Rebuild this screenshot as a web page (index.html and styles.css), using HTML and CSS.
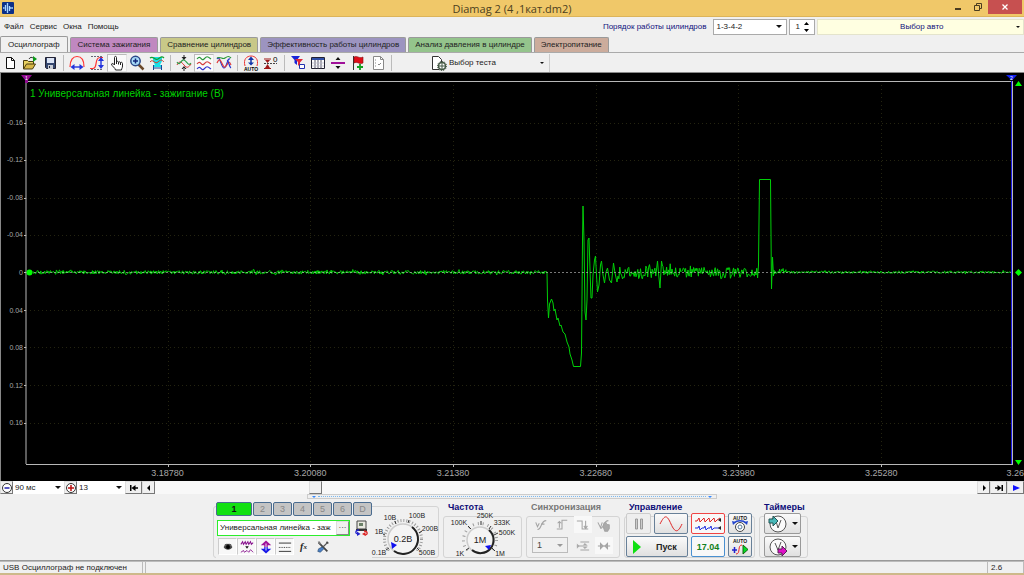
FILE: index.html
```html
<!DOCTYPE html>
<html lang="ru">
<head>
<meta charset="utf-8">
<title>Diamag 2 (4 ,1кат.dm2)</title>
<link rel="stylesheet" href="styles.css">
<script src="trace.js" defer></script>
</head>
<body>
<div class="app">
<header class="titlebar">
  <svg class="app-icon" viewBox="0 0 12 12"><rect width="12" height="12" rx="1" fill="#0c3088"/><path d="M1 6h1.500M3.500 3v6M5.500 1v10M7.500 4v5M9 5v2M10 6h1" fill="none" stroke="#a8d4ff" stroke-width="1.300"/></svg>
  <h1>Diamag 2 (4 ,1кат.dm2)</h1>
  <div class="window-buttons">
    <button aria-label="Свернуть"><svg width="8" height="8"><path d="M1 6h6" stroke="#4a3c20" stroke-width="2"/></svg></button>
    <button aria-label="Восстановить"><svg width="8" height="8"><path d="M2.500 2V.500h5v5H6M.500 2.500h5v5h-5z" fill="none" stroke="#4a3c20"/></svg></button>
    <button class="close" aria-label="Закрыть"><svg width="6" height="6"><path d="M.5.500l5 5m0-5l-5 5" stroke="#fff" stroke-width="1.300"/></svg></button>
  </div>
</header>

<div class="menubar">
  <nav class="menu"><a href="#">Файл</a><a href="#">Сервис</a><a href="#">Окна</a><a href="#">Помощь</a></nav>
  <div class="engine">
    <label for="order">Порядок работы цилиндров</label>
    <div class="pick order"><select id="order"><option>1-3-4-2</option></select><span class="arrow"></span></div>
    <div class="pick count"><input id="count" type="text" value="1" aria-label="Цилиндр"><svg width="7" height="12"><path d="M1 4L3.500 1 6 4zM1 8L3.500 11 6 8z"/></svg></div>
    <div class="pick auto"><select aria-label="Авто"><option>Выбор авто</option></select><span class="arrow"></span></div>
  </div>
</div>

<nav class="tabs">
  <button class="tab t1">Осциллограф</button>
  <button class="tab t2">Система зажигания</button>
  <button class="tab t3">Сравнение цилиндров</button>
  <button class="tab t4">Эффективность работы цилиндров</button>
  <button class="tab t5">Анализ давления в цилиндре</button>
  <button class="tab t6">Электропитание</button>
</nav>

<div class="toolbar">
  <button aria-label="Новый"><svg viewBox="0 0 16 16"><path d="M4.500 2.500h5l3 3v8h-8z" fill="#fff" stroke="#111"/><path d="M9.500 2.500v3h3" fill="none" stroke="#111"/></svg></button>
  <button aria-label="Открыть"><svg viewBox="0 0 16 16"><path d="M1.500 14V5.500h4l1 1h5V9" fill="#e8d060" stroke="#4a3c10"/><path d="M1.500 14l3-5h9l-3 5z" fill="#d8b848" stroke="#4a3c10"/><path d="M7 4c1-2 3-2 4-1" fill="none" stroke="#333"/><path d="M11 1l4 3-4 3z" fill="#0a9a18"/></svg></button>
  <button aria-label="Сохранить"><svg viewBox="0 0 16 16"><path d="M3.500 2.500h10v11h-9l-1-1z" fill="#34466e" stroke="#223"/><path d="M5 3h7v5H5z" fill="#dce4f4"/><path d="M6 10h5v4H6z" fill="#c8ccd4"/><path d="M7 11h1v2H7z" fill="#223"/></svg></button>
  <i class="sep"></i>
  <button aria-label="Размах по горизонтали"><svg viewBox="0 0 16 16"><path d="M1 12C1 5 4 1.500 8 1.500S15 5 15 12" fill="none" stroke="#f33" stroke-width="1.200"/><path d="M3 12h10" stroke="#23d" stroke-width="1.400"/><path d="M1.500 12l4-3v6zM14.500 12l-4-3v6z" fill="#23d"/></svg></button>
  <button aria-label="Размах по вертикали"><svg viewBox="0 0 16 16"><path d="M1 13.500h3C9 13.500 5 2.500 11 2.500h3" fill="none" stroke="#f33" stroke-width="1.200"/><path d="M2 1.500h12M2 14.500h12" stroke="#667" stroke-dasharray="2 1"/><path d="M12 4v8" stroke="#23d" stroke-width="1.400"/><path d="M12 2l-3 4h6zM12 14l-3-4h6z" fill="#23d"/></svg></button>
  <button class="on" aria-label="Рука"><svg viewBox="0 0 16 16"><path d="M5.500 10V2.500c0-1.500 2-1.500 2 0V7c0-1 2-1 2 .5 0-1 2-1 2 .5 0-1 2-1 2 .5V11c0 2-1 2.500-1 4h-6c0-2-4-4-4-6 .5-1 2-.5 3 1z" fill="#fff" stroke="#222"/><path d="M7.500 7v2M9.500 7.500v2M11.500 8v2" stroke="#222"/></svg></button>
  <button aria-label="Масштаб"><svg viewBox="0 0 16 16"><path d="M9.500 9.500l5 5" stroke="#6b4a2c" stroke-width="2.500"/><circle cx="6.500" cy="6" r="4.700" fill="#a8dcf8" stroke="#2a4888" stroke-width="1.500"/><path d="M4 6h5M6.500 3.500v5" stroke="#11257a" stroke-width="1.500"/></svg></button>
  <button aria-label="Линейки"><svg viewBox="0 0 16 16"><path d="M4 2h9v4l-2 4h2v2H4v-2h2L4 6z" fill="#18e0e8"/><path d="M1 3c3-3 5 3 8 1s4-3 6-1" fill="none" stroke="#16a030" stroke-width="1.200"/><path d="M1 7c3-4 5 3 8 0s4-2 6 0" fill="none" stroke="#d04030"/><path d="M4.500 10v5M12.500 10v5M5 13h7" stroke="#124a98"/></svg></button>
  <i class="sep"></i>
  <button aria-label="Сжать"><svg viewBox="0 0 16 16"><path d="M1 10c2-4 4-4 7 0s5 2 7-1" fill="none" stroke="#d33"/><path d="M1 7c3 5 4-3 7-2s4 7 7 3" fill="none" stroke="#28a048" stroke-width="1.200"/><path d="M8 5L5.500 2h5zM8 11l-2.500 3h5zM7.500 0h1v3h-1zM7.500 13h1v3h-1z" fill="#222"/></svg></button>
  <button class="on" aria-label="Разделить"><svg viewBox="0 0 16 16" fill="none" stroke-width="1.200"><path d="M1 4c4-5 4 3 7 0s3-3 7 0" stroke="#289838"/><path d="M1 9c4-5 4 3 7 0s3-3 7 0" stroke="#d43c3c"/><path d="M1 14c4-5 4 3 7 0s3-3 7 0" stroke="#33c"/></svg></button>
  <button aria-label="Совместить"><svg viewBox="0 0 16 16" fill="none" stroke-width="1.200"><path d="M1 4c3-5 4 9 7 9s3-10 6-9" stroke="#2233d0"/><path d="M1 8c4-9 5 5 8 4s3-9 6-2" stroke="#e03c3c"/><path d="M1 3c4-2 5 2 8 0s4-2 6 0" stroke="#289838"/><path d="M11 5c2 1 2 7 4 8" stroke="#2233d0"/></svg></button>
  <i class="sep"></i>
  <button aria-label="Автомасштаб"><svg viewBox="0 0 16 16"><path d="M2 11C0 4 4 1 8 1s8 3 6 10" fill="none" stroke="#e33"/><path d="M8 3v6" stroke="#13a" stroke-width="1.500"/><path d="M8 1.500L5 5h6zM8 10.500L5 7.500h6z" fill="#13a"/><text x="8" y="15.500" font-size="5" font-weight="700" text-anchor="middle">AUTO</text></svg></button>
  <button aria-label="Ноль"><svg viewBox="0 0 16 16"><path d="M1 8.500h13" stroke="#444" stroke-dasharray="2 1"/><path d="M4.500 8L2 5h5zM4.500 9L2 13h5z" fill="#a01818"/><path d="M1 3.500h7v1H1zM1 13h7v1H1z" fill="#a01818"/><text x="10" y="7" font-size="8">0</text></svg></button>
  <i class="sep"></i>
  <button aria-label="Фильтр"><svg viewBox="0 0 16 16"><path d="M1 1h9L7 5v5L4.500 8V5z" fill="#1824d8"/><path d="M5 4h8l-3 3.500V12L8 10V7z" fill="#e02838"/><path d="M9.500 9.500h5v4h-5z" fill="#fff" stroke="#2030b0"/></svg></button>
  <button aria-label="Таблица"><svg viewBox="0 0 16 16"><path d="M1.500 2.500h13v11h-13z" fill="#fff" stroke="#223"/><path d="M2 3h12v2H2z" fill="#3050a8"/><path d="M5 5v8.500M8 5v8.500M11 5v8.500" stroke="#556"/><path d="M2 8h12M2 11h12" stroke="#bbc" stroke-width=".8"/></svg></button>
  <button aria-label="Разделитель"><svg viewBox="0 0 16 16"><path d="M1 8h14" stroke="#a0109a" stroke-width="2"/><path d="M8 2L5.500 5h5zM8 14l-2.500-3h5z" fill="#111"/></svg></button>
  <button aria-label="Флаг"><svg viewBox="0 0 16 16"><path d="M3.500 1v14" stroke="#333"/><path d="M4 2c3-2 5 2 9 0v6c-4 2-5-2-9 0z" fill="#e00c18" stroke="#801010" stroke-width=".6"/><path d="M7 12h6M10 9v6" stroke="#10a020" stroke-width="1.800"/></svg></button>
  <button aria-label="Отчёт"><svg viewBox="0 0 16 16"><path d="M3.500 1.500h7l3 3v10h-10z" fill="#fff" stroke="#888"/><path d="M10.500 1.500v3h3M5 5h1M5 8h1M5 11h1M8 9l1 1 2-2" fill="none" stroke="#888"/></svg></button>
  <i class="sep"></i>
  <button class="test"><svg viewBox="0 0 16 16"><path d="M8 14.500H1.500v-13h6l3 3V7" fill="#fff" stroke="#333"/><circle cx="11" cy="11" r="3.500" fill="#fff" stroke="#455a45" stroke-width="1.500"/><circle cx="11" cy="11" r="4.500" fill="none" stroke="#344834" stroke-dasharray="1.200 1.100"/><path d="M8 11h6M11 8v6" stroke="#455a45"/></svg><span>Выбор теста</span><b class="arrow"></b></button>
</div>

<main class="chart">
  <svg class="plot" viewBox="26 81 987 383" preserveAspectRatio="none">
    <g class="grid">
      <path d="M26 123.500H1013M26 160.500H1013M26 198.500H1013M26 235.500H1013M26 310.500H1013M26 347.500H1013M26 385.500H1013M26 423.500H1013"/>
      <path d="M168.500 81V464M310.500 81V464M453.500 81V464M596.500 81V464M738.500 81V464M881.500 81V464"/>
    </g>
    <path id="trace" class="trace"/>
    <path class="zero" d="M26 272.500H1013"/>
    <path class="ticks" d="M168.500 464v3M310.500 464v3M453.500 464v3M596.500 464v3M738.500 464v3M881.500 464v3M24 123.500h2M24 160.500h2M24 198.500h2M24 235.500h2M24 272.500h2M24 310.500h2M24 347.500h2M24 385.500h2M24 423.500h2"/>
    <path class="frame" d="M26 81.500H1013M26 464.500H1013M26 81V464M1012.500 81V464"/>
    <path d="M1011.500 81V464" stroke="#1818e0"/>
    <circle cx="29.500" cy="272.500" r="3" fill="#0f0"/>
    <path d="M21 75h11l-4 5v3h-3v-3z" fill="#900a90"/><path d="M1006 75h11l-5 5.500z" fill="#1020f0"/>
    <path d="M1018.500 81l3.500 5h-7zM1018.500 465l3.500-5h-7zM1018.500 269l3.500 3.500-3.500 3.500-3.500-3.500z" fill="#0f0"/>
    <text x="25" y="80" fill="#fff" font-size="5">1</text><text x="1010" y="80" fill="#fff" font-size="5">2</text>
  </svg>
  <div class="channel-title">1 Универсальная линейка - зажигание (В)</div>
  <div class="y-axis"><span>-0.16</span><span>-0.12</span><span>-0.08</span><span>-0.04</span><span>0</span><span>0.04</span><span>0.08</span><span>0.12</span><span>0.16</span></div>
  <div class="x-axis"><span>3.18780</span><span>3.20080</span><span>3.21380</span><span>3.22680</span><span>3.23980</span><span>3.25280</span><span>3.26</span></div>
</main>

<div class="scrollrow">
  <button aria-label="Уменьшить"><svg viewBox="0 0 12 12"><circle cx="6" cy="6" r="4.500" fill="#fff" stroke="#333"/><path d="M3.500 6h5" stroke="#22a" stroke-width="1.500"/></svg></button>
  <div class="pick"><select class="time" aria-label="Время"><option>90 мс</option></select><span class="arrow"></span></div>
  <button aria-label="Увеличить"><svg viewBox="0 0 12 12"><circle cx="6" cy="6" r="4.500" fill="#fff" stroke="#333"/><path d="M3 6h6M6 3v6" stroke="#b11" stroke-width="1.500"/></svg></button>
  <div class="pick"><select class="zoom" aria-label="Масштаб"><option>13</option></select><span class="arrow"></span></div>
  <button class="wide" aria-label="В начало"><svg viewBox="0 0 12 12"><path d="M2 3h1.500v6H2zM3.500 6l4-3v2.200H10v1.600H7.500V9z"/></svg></button>
  <button aria-label="Назад"><svg viewBox="0 0 12 12"><path d="M4 6l3-3v6z"/></svg></button>
  <div class="track"><i class="thumb"></i></div>
  <button aria-label="Вперёд"><svg viewBox="0 0 12 12"><path d="M8 6L5 3v6z"/></svg></button>
  <button class="wide" aria-label="В конец"><svg viewBox="0 0 12 12"><path d="M10 3H8.500v6H10zM8.500 6l-4-3v2.200H2v1.600h2.500V9z"/></svg></button>
  <button class="wide" aria-label="Воспроизвести"><svg viewBox="0 0 12 12"><path d="M10 6L3 3v6z" fill="#11f"/></svg></button>
</div>

<section class="panel">
  <div class="splitter"><i></i><b></b><i></i></div>
  <div class="groups">
    <fieldset class="group g-channel">
      <div class="channel">
        <div class="channel-buttons"><button class="active">1</button><button>2</button><button>3</button><button>4</button><button>5</button><button>6</button><button>D</button></div>
        <div class="probe">
          <div class="probe-box"><input type="text" value="Универсальная линейка - заж" aria-label="Датчик"><button>···</button></div>
          <svg width="14" height="16" viewBox="0 0 14 16"><path d="M3 1h9v8H3z" fill="#e8e8e0" stroke="#444"/><path d="M2 10h11" stroke="#333" stroke-width="2"/><path d="M5 3h4v3H5z" fill="#6a8068"/><path d="M5 10c-4 0-4 4-1 4" fill="none" stroke="#22c" stroke-width="1.300"/><path d="M3 11.500L6.500 14 3 16z" fill="#22c"/><path d="M10 11c4 0 4 4 1 4" fill="none" stroke="#d22" stroke-width="1.300"/><path d="M11.500 12L8 14l3.500 2z" fill="#d22"/></svg>
        </div>
        <div class="channel-tools">
          <button class="on" aria-label="Видимость"><svg viewBox="0 0 16 16"><path d="M3 8c2-4 8-4 10 0-2 4-8 4-10 0z" fill="#444"/><circle cx="8" cy="8" r="2.200"/><path d="M4 6l2-1 4 0 2 1" stroke="#111" fill="none"/></svg></button>
          <button class="on" aria-label="Фильтр"><svg viewBox="0 0 16 16" fill="none" stroke="#8a1490"><path d="M1 5l2-3 1 3 2-3 1 3 2-3 1 3 2-3 1 3 2-2" stroke-width="1.200"/><path d="M1 14l3-2 1 2 3-2 2 2 2-3 3 3"/><path d="M6 7h4L8 10z" fill="#111" stroke="none"/></svg></button>
          <button class="on" aria-label="Инверсия"><svg viewBox="0 0 16 16"><path d="M6 8V6H2l6-5.500L14 6h-4v2z" fill="#a0109a"/><path d="M6 8v2H2l6 5.500L14 10h-4V8z" fill="#1818e8"/><path d="M7.500 4h1v8h-1z" fill="#fff"/></svg></button>
          <button class="on" aria-label="Линии"><svg viewBox="0 0 16 16"><path d="M1 3.500h14M1 13h14" stroke="#222"/><path d="M1 8.500h14" stroke="#222" stroke-dasharray="1 1"/></svg></button>
          <button class="fx">f<small>x</small></button>
          <button aria-label="Настройки"><svg viewBox="0 0 16 16"><path d="M3 3l10 10M12 2l2 2" stroke="#444" stroke-width="2"/><path d="M13 3l-7 7" stroke="#555" stroke-width="1.500"/><path d="M7 8l2 2-4 4-3-1 1-3z" fill="#4a80c8" stroke="#246" stroke-width=".7"/><path d="M2 2l2-.5 2 3-2 1z" fill="#777"/></svg></button>
        </div>
      </div>
      <svg class="knob" width="66" height="50" viewBox="372 508 66 50">
        <circle cx="403" cy="540" r="18.500" fill="none" stroke="#999" stroke-width="3" stroke-dasharray="1 2" class="arc"/>
        <circle cx="403" cy="540" r="15" fill="#f4f4f4" stroke="#ccc" stroke-width="1.500"/><path d="M412 528a15 15 0 0 1-18 24" fill="none" stroke="#222" stroke-width="2"/>
        <path d="M389 549l-3 2M385 536l-2-1M396 525l-1-3M408 524l1-3M419 534l3-2M417 549l2 2" stroke="#333"/>
        <path d="M391 543l6 3-5 4z" fill="#11e"/>
        <text x="403" y="543" class="value">0.2В</text><text x="390" y="521">10В</text><text x="417" y="519">100В</text><text x="379" y="535">1В</text><text x="430" y="532">200В</text><text x="379" y="556">0.1В</text><text x="427" y="556">500В</text>
      </svg>
    </fieldset>

    <fieldset class="group g-rate"><legend>Частота</legend>
      <svg class="knob" width="75" height="46" viewBox="446 512 75 46">
        <circle cx="481" cy="540" r="16.500" fill="none" stroke="#999" stroke-width="3" stroke-dasharray="1 4" class="arc"/>
        <circle cx="481" cy="540" r="13" fill="#f4f4f4" stroke="#ccc" stroke-width="1.500"/><path d="M490 530a13 13 0 0 1-17 20" fill="none" stroke="#222" stroke-width="2"/>
        <path d="M470 548l-3 2M472 529l-3-3M482 525v-4M490 529l2-3M495 535l4-2M493 548l3 3" stroke="#333"/>
        <path d="M492 545l-6 1 4 4z" fill="#11e"/>
        <text x="481" y="543" class="value">1M</text><text x="486" y="518">250K</text><text x="460" y="525">100K</text><text x="503" y="525">333K</text><text x="508" y="535">500K</text><text x="461" y="556">1K</text><text x="501" y="556">1M</text>
      </svg>
    </fieldset>

    <fieldset class="group g-sync"><legend class="muted">Синхронизация</legend>
      <div class="sync">
        <button aria-label="Синхронизация"><svg viewBox="0 0 16 16"><path d="M2 5l2 5 2-4M4 13c5 1 3-10 10-10M8 7h4" /></svg></button>
        <button aria-label="Фронт"><svg viewBox="0 0 16 16"><path d="M2 12.500h6v-10h6M5 11V4M3 6l2-2 2 2"/></svg></button>
        <button class="lit" aria-label="Спад"><svg viewBox="0 0 16 16"><path d="M1 3.500h6v9h7M11 3v8M9 9l2 3 2-3"/></svg></button>
        <button aria-label="Вручную"><svg viewBox="0 0 16 16"><path d="M1 5l3 6 2-6M4 12c4 0 3-9 9-9"/><path d="M8 6l2-1 1 2 3 1v4l-2 3H9L7 10z" fill="#aaa"/></svg></button>
        <div class="pick level"><select aria-label="Канал" disabled><option>1</option></select><span class="arrow"></span></div>
        <button aria-label="Уровень"><svg viewBox="0 0 16 16"><path d="M5 3.500h10M5 12.500h10M1 8h12"/><path d="M10 4.500l3 2.500h-5zM10 11.500l3-2.500h-5zM1 5l3 3-3 3z" fill="#aaa" stroke="none"/></svg></button>
        <button class="lit" aria-label="Центр"><svg viewBox="0 0 16 16"><path d="M1 8h14"/><path d="M4 5l3 3-3 3zM12 5L9 8l3 3z" fill="#aaa"/></svg></button>
      </div>
    </fieldset>

    <fieldset class="group g-control"><legend>Управление</legend>
      <div class="controls">
        <button class="pause" aria-label="Пауза"><svg viewBox="0 0 12 14"><path d="M2.500 2h2v10h-2zM7.500 2h2v10h-2z" fill="#ccc" stroke="#999"/></svg></button>
        <button aria-label="Синус"><svg width="24" height="16" viewBox="0 0 24 16"><path d="M1 8C6-2 8-1 12 8s7 9 11 0" fill="none" stroke="#e02828"/></svg></button>
        <button class="red" aria-label="Каналы"><svg width="28" height="16" viewBox="0 0 28 16" fill="none"><path d="M1 5h2l2-3 1 4 2-2 2-2 1 4 2-2 2-2 1 4 2-2 2-2 1 4 2-2 3-2" stroke="#e02020"/><path d="M1 12h3l1-2 1 4 2-2h2l1-2 1 4 2-2h2l1-2 1 4 2-2h5" stroke="#2030e0"/><path d="M27 2v4l-3-2zM27 10v4l-3-2z" fill="#222"/></svg></button>
        <button aria-label="Авто"><svg width="20" height="18" viewBox="0 0 20 18"><text x="10" y="5" class="auto-text">AUTO</text><circle cx="10" cy="12" r="4.500" fill="#fff" stroke="#444"/><path d="M4 8c3-3 9-3 12 0" fill="none" stroke="#24c" stroke-width="1.500"/><path d="M2 6l4 1-3 3zM18 6l-4 1 3 3z" fill="#24c"/><circle cx="10" cy="12" r="2" fill="none" stroke="#579"/></svg></button>
        <button class="start"><svg width="8" height="14" viewBox="0 0 8 14"><path d="M0 0l8 7-8 7z" fill="#0ee012"/></svg><span>Пуск</span></button>
        <button class="date">17.04</button>
        <button aria-label="Автопуск"><svg width="20" height="18" viewBox="0 0 20 18"><text x="10" y="5" class="auto-text">AUTO</text><path d="M2 12h5M4.500 9v6" stroke="#22c" stroke-width="1.500"/><path d="M6 16c5 0 1-9 6-9" fill="none" stroke="#e22"/><path d="M13 7l5 4.500-5 4.500z" fill="#0d2" stroke="#161"/></svg></button>
      </div>
    </fieldset>

    <fieldset class="group g-timers"><legend>Таймеры</legend>
      <div class="timers">
        <button aria-label="Таймер запуска"><svg viewBox="0 0 20 18"><circle cx="10" cy="9" r="8" fill="#fafafa" stroke="#555"/><path d="M10 13l3-8M10 13L8 6" stroke="#555"/><path d="M1 4h4V1l5 5-5 5V8H1z" fill="#48b8b8" stroke="#255"/></svg><b class="arrow"></b></button>
        <button aria-label="Таймер остановки"><svg viewBox="0 0 20 18"><circle cx="10" cy="9" r="8" fill="#fafafa" stroke="#555"/><path d="M10 12l3-8M10 12L7 5" fill="none" stroke="#555"/><path d="M10 11h4V8l5 5-5 5v-3h-4z" fill="#e010c8" stroke="#525"/></svg><b class="arrow"></b></button>
      </div>
    </fieldset>
  </div>
</section>

<footer class="status"><span class="s1">USB Осциллограф не подключен</span><span class="s2"></span><span class="s3">2.6</span></footer>
<div class="edge"></div>
</div>
</body>
</html>
```
FILE: styles.css
```css
* { box-sizing: border-box; }
body { margin: 0; font: 8px/12px "Liberation Sans", Arial, sans-serif; color: #222; background: #f0f0f0; }
.app { display: flex; flex-direction: column; min-height: 100vh; overflow: hidden; }
button, select, input { font: inherit; color: inherit; margin: 0; padding: 0; border: 0; background: none; border-radius: 0; appearance: none; }
button { display: flex; align-items: center; justify-content: center; }
svg { display: block; flex: none; }
.arrow { width: 0; height: 0; border: 3px solid transparent; border-top-color: #111; border-bottom: 0; }
.pick { display: grid; align-items: center; }
.pick > * { grid-area: 1 / 1; }
.pick > .arrow, .pick > svg { justify-self: end; margin-right: 4px; pointer-events: none; }

.titlebar { display: grid; grid-template-columns: 80px 1fr 80px; align-items: start; height: 17px; background: #f0c869; border-bottom: 1px solid #dcb45a; }
.app-icon { width: 12px; height: 12px; margin: 2px; }
.titlebar h1 { margin: 0; text-align: center; font: 11px/17px "Open Sans", sans-serif; color: #4c4020; }
.window-buttons { display: flex; justify-content: flex-end; padding-right: 2px; }
.window-buttons button { width: 20px; height: 14px; }
.window-buttons .close { width: 34px; background: #c75050; }

.menubar { display: flex; justify-content: space-between; align-items: center; height: 19px; }
.menu { display: flex; gap: 6px; padding-left: 4px; }
.menu a { color: #222; text-decoration: none; }
.engine { display: flex; align-items: center; flex: 0 0 42%; gap: 2px; color: #11117c; }
.engine label { margin: 0 5px 0 9px; white-space: nowrap; }
.engine .pick { height: 16px; background: #fff; border: 1px solid #aaa; }
.engine select, .engine input { height: 14px; padding-left: 2px; width: 100%; min-width: 0; }
.order { width: 74px; color: #222; }
.count { width: 26px; color: #222; }
.engine .count input { padding-left: 5px; }
.engine .auto { flex: 1; background: #ffffe1; border-color: #e4e4cc; }
.auto select { text-align-last: center; }
.engine .auto .arrow { border-width: 2px; border-bottom: 0; margin-right: 3px; }

.tabs { display: flex; align-items: flex-end; gap: 2px; height: 17px; padding-top: 1px; border-bottom: 1px solid #aaa; }
.tab { height: 15px; padding: 0 6px; white-space: nowrap; border: 1px solid #9a9a9a; border-bottom: 0; border-radius: 2px 2px 0 0; }
.t1 { height: 16px; padding: 0 7px; background: #f0f0f0; }
.t2 { padding: 0 7px; background: #c088c0; }
.t3 { background: #c8c888; }
.t4 { background: #9c94c0; }
.t5 { background: #94c48c; }
.t6 { background: #ccac9c; }

.toolbar { display: flex; align-items: center; height: 20px; border-bottom: 1px solid #888; }
.toolbar button { width: 20px; height: 18px; }
.toolbar svg { width: 16px; height: 16px; }
.toolbar .on { background: #fafafa; border: 1px solid #bbb; border-right-color: #e4e4e4; border-bottom-color: #e4e4e4; }
.sep { width: 1px; height: 16px; margin: 0 3px; background: #bbb; }
.toolbar .test { width: 155px; padding: 0 5px 0 36px; gap: 2px; border-right: 1px solid #ccc; }
.test .arrow { border-width: 2px; border-bottom: 0; margin-left: auto; }

.chart { display: grid; grid-template: 8px minmax(0, 1fr) 17px / 25px minmax(0, 1fr) 11px; flex: 1 1 300px; min-height: 300px; overflow: hidden; background: #000; border-left: 1px solid #888; color: #a8a8a8; }
.plot { grid-area: 2 / 2; width: 100%; height: 100%; overflow: visible; fill: none; }
.grid { stroke: #242410; stroke-dasharray: 1 3; }
.zero { stroke: #c8c8c8; stroke-dasharray: 2 2; stroke-opacity: .6; }
.trace { stroke: #00d008; stroke-linejoin: bevel; }
.frame, .ticks { stroke: #b8b8b8; }
.channel-title { grid-area: 2 / 2; align-self: start; padding: 7px 0 0 4px; font-size: 10px; color: #00d000; }
.y-axis { grid-area: 1 / 1 / 4 / 2; display: grid; grid-template-rows: repeat(9, 1fr); align-items: center; justify-items: end; padding: 31px 3px 39px 0; font-size: 7px; }
.x-axis { grid-area: 3 / 1 / 4 / 4; display: grid; grid-template-columns: repeat(6, 143px) 1fr; grid-template-columns: repeat(6, 15.100%) 1fr; text-align: center; align-items: center; padding-left: 9.300%; font-size: 9px; white-space: nowrap; }
.x-axis { grid-template-columns: repeat(6, minmax(0, 142fr)) minmax(0, 71fr); }
.x-axis span:last-child { text-align: right; }

.scrollrow { display: flex; height: 13px; background: #f0f0f0; }
.scrollrow button { width: 13px; height: 13px; background: #f0f0f0; border: 1px solid #ddd; border-right-color: #777; border-bottom-color: #777; }
.scrollrow button.wide { width: 17px; }
.scrollrow svg { width: 12px; height: 12px; }
.scrollrow .pick { background: #fff; }
.scrollrow .pick .arrow { margin-right: 3px; }
.time { width: 51px; padding-left: 2px; }
.zoom { width: 48px; padding-left: 2px; }
.track { flex: 1; background: #f8f8f8; padding-left: 15%; }
.thumb { display: block; width: 13px; height: 13px; background: #f0f0f0; border: 1px solid #ddd; border-right-color: #777; border-bottom-color: #777; }

.panel { border-bottom: 1px solid #999; padding-bottom: 2px; }
.splitter { display: flex; align-items: center; width: 40%; height: 5px; margin: 0 auto; padding: 0 4px; gap: 2px; border: 1px solid #ccc; }
.splitter i { border: 2px solid transparent; border-top-color: #38f; border-bottom: 0; }
.splitter b { flex: 1; border-top: 1px dotted #7ab8f0; }
.groups { display: flex; justify-content: center; gap: 4px; padding: 3px 3px 0 0; }
.group { position: relative; min-width: 0; height: 56px; margin: 0; padding: 0 2px; border: 0; }
.group::before { content: ""; position: absolute; inset: 4px 0 0; border: 1px solid #d4d4d4; border-radius: 3px; pointer-events: none; }
.group > * { position: relative; }
legend { padding: 0 2px; margin-left: 1px; font-weight: 700; line-height: 10px; font-size: 9px; color: #0c0c78; background: #f0f0f0; }
legend.muted { color: #777; }
.g-channel { display: flex; width: 226px; padding: 0 1px 0 3px; }
.g-rate { width: 79px; }
.g-sync { width: 94px; }
.g-control { width: 131px; }
.g-timers { width: 49px; }
.channel { width: 156px; background: #f0f0f0; }
.channel-buttons { display: flex; gap: 1px; }
.channel-buttons button { flex: 1; height: 14px; font-size: 9px; color: #888; background: #c4c4c4; border: 1px solid #4a6c90; border-radius: 2px; }
.channel-buttons .active { flex: 0 0 36px; color: #111; background: #12e012; font-weight: 700; }
.probe { display: flex; align-items: center; gap: 4px; padding: 4px 0 2px 1px; }
.probe-box { display: flex; width: 133px; height: 16px; border: 1px solid #2cee2c; background: #fff; }
.probe-box input { flex: 1; min-width: 0; padding-left: 2px; }
.probe-box button { width: 13px; background: #f0f0f0; border: 1px solid #ddd; border-right-color: #888; border-bottom-color: #888; }
.channel-tools { display: flex; padding-left: 2px; }
.channel-tools button { width: 19px; height: 17px; }
.channel-tools .on { background: #f8f8f8; border: 1px solid #ccc; border-right-color: #fff; border-bottom-color: #fff; }
.channel-tools svg { width: 14px; height: 14px; }
.channel-tools .fx { font: italic 700 10px/12px "Liberation Serif", serif; }
.fx small { font-size: 7px; }
.knob { margin-top: 5px; font-size: 7px; overflow: visible; }
.g-rate .knob { margin-top: 0; }
.knob text { text-anchor: middle; fill: #222; }
.knob .value { font-size: 9px; }
.arc { clip-path: polygon(0 0, 100% 0, 100% 80%, 0 80%); }

.sync { display: grid; grid-template-columns: repeat(4, 20px); row-gap: 4px; column-gap: 1px; padding: 4px 0 0 4px; }
.sync button { width: 18px; height: 17px; }
.sync .lit { background: #f8f8f8; }
.sync svg { width: 14px; height: 14px; fill: none; stroke: #a4a4a4; stroke-width: 1.200; }
.level { grid-column: span 2; width: 36px; height: 16px; border: 1px solid #bbb; }
.level select { padding-left: 4px; font-size: 9px; opacity: 1; color: #444; }
.level .arrow { border-top-color: #999; }
.controls { display: grid; grid-template-columns: 25px 34px 34px 24px; gap: 2px 3px; padding-top: 1px; }
.controls button, .timers button { height: 21px; border: 1px solid #688098; border-radius: 2px; background: linear-gradient(#fafafa, #e0e0e0); }
.controls .pause { border-color: #ccc; background: #eee; }
.controls .pause svg { width: 12px; height: 14px; }
.controls .red { border-color: #f04444; background: #f8f8f8; }
.controls .start { grid-column: span 2; justify-content: flex-start; padding-left: 6px; gap: 15px; font-size: 9px; font-weight: 700; }
.controls .date { color: #118020; font-weight: 700; font-size: 9px; border-color: #4a90d0; background: #f8f8f8; }
.auto-text { font-size: 5px; font-weight: 700; text-anchor: middle; fill: #111; }
.timers { display: grid; gap: 2px; padding: 1px 3px 0; }
.timers button { width: 37px; gap: 4px; border-color: #999; }
.timers svg { width: 20px; height: 18px; }

.status { display: flex; height: 12px; border-top: 1px solid #bbb; font-size: 8px; line-height: 11px; }
.status span { border-right: 1px solid #bbb; padding-left: 3px; }
.s1 { width: 143px; white-space: nowrap; }
.status .s2 { flex: 1; margin-left: 2px; border-left: 1px solid #bbb; }
.s3 { width: 36px; }
.edge { height: 2px; background: #cdb98a; }
```
FILE: trace.js
```js
// Builds the ignition waveform polyline in plot units.
(function () {
  let seed = 17;
  const rnd = () => {
    seed = (seed * 16807) % 2147483647;
    return seed / 2147483647 - 0.5;
  };
  const pts = [];
  const noise = (from, to, amp, base, step) => {
    for (let x = from; x < to; x += step) {
      const spike = rnd() > 0.42 ? 1.6 : 1;
      pts.push([x, base + rnd() * amp * spike]);
    }
  };
  noise(33, 547, 3.6, 272.3, 0.6);
  pts.push([547, 272], [547.5, 300], [548.5, 318], [549.5, 304], [551.5, 299], [553, 303], [554, 311], [555, 309],
    [557, 320], [558, 318], [560, 326], [561, 325], [563, 332], [565, 334], [567, 342], [569, 347], [570, 354],
    [572, 360], [573.5, 366.5], [580.5, 366.5], [581.5, 353], [582.5, 240], [583, 206], [584, 240],
    [585, 312], [586, 320], [587, 300], [588, 240], [589, 238], [590, 270], [591, 298], [592, 298],
    [593, 275], [594.5, 260], [595.5, 256], [596.5, 275], [597.5, 292], [599, 285], [600.5, 265], [601.5, 261],
    [603, 275], [604.5, 283], [606, 272], [607.5, 268], [609.5, 280], [611.5, 283], [613.5, 263], [615, 273], [617, 282]);
  noise(618, 657, 12, 273, 0.9);
  pts.push([657.5, 261], [658.5, 273], [660, 288], [661.5, 261], [662.5, 266]);
  noise(663, 680, 13, 273, 0.9);
  noise(680, 758, 11, 273, 0.8);
  pts.push([758.5, 265], [759.5, 179.5], [770.5, 179.5], [771.5, 289], [772.5, 257], [773.5, 276]);
  noise(774, 786, 5, 271, 0.7);
  noise(786, 1011, 2.4, 272.2, 0.6);
  document.getElementById('trace').setAttribute('d', 'M' + pts.map((p) => p.join(' ')).join('L'));
})();
```
